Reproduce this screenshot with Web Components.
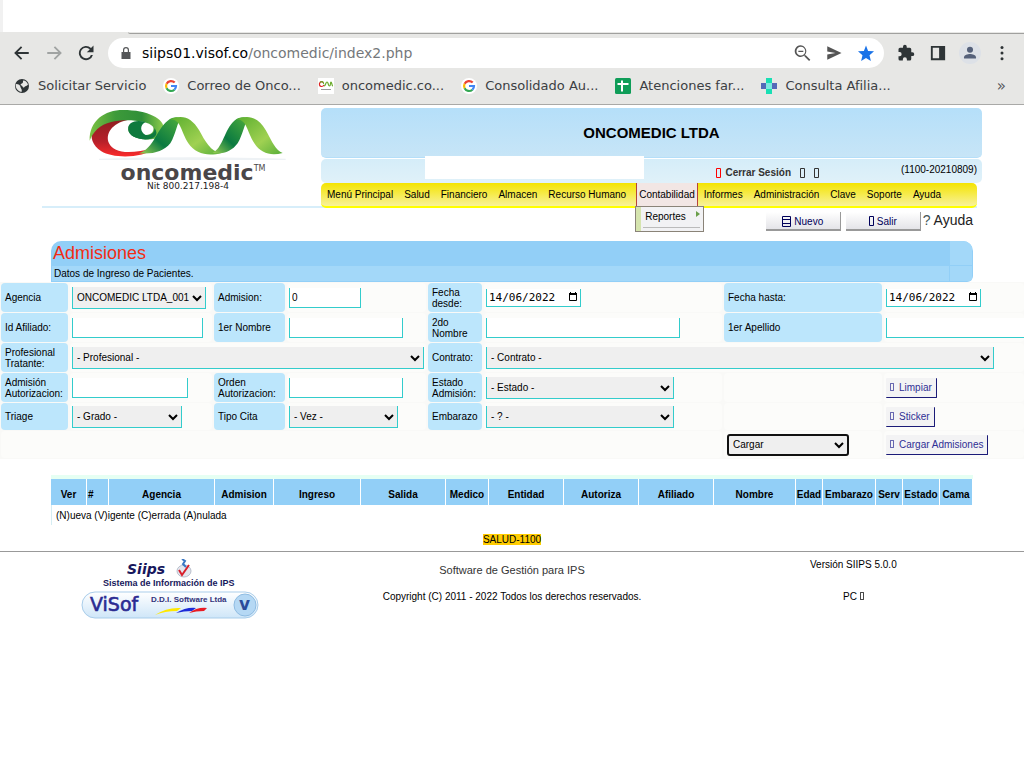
<!DOCTYPE html>
<html lang="es">
<head>
<meta charset="utf-8">
<title>SIIPS - Admisiones</title>
<style>
  body {
    margin: 0;
    background: #fff;
    color: #000;
    font-family: "Liberation Sans", Arial, sans-serif;
    font-size: 10px;
    line-height: 11px;
    overflow-x: hidden;
  }
</style>
</head>
<body>

<browser-bar host="siips01.visof.co" path="/oncomedic/index2.php">
  <bookmark-link icon="globe">Solicitar Servicio</bookmark-link>
  <bookmark-link icon="google">Correo de Onco...</bookmark-link>
  <bookmark-link icon="onco">oncomedic.co...</bookmark-link>
  <bookmark-link icon="google">Consolidado Au...</bookmark-link>
  <bookmark-link icon="sheet">Atenciones far...</bookmark-link>
  <bookmark-link icon="cross">Consulta Afilia...</bookmark-link>
</browser-bar>

<clinic-header company="ONCOMEDIC LTDA" session="(1100-20210809)">
  <onco-logo slot="logo"></onco-logo>
  <main-menu slot="menu"></main-menu>
</clinic-header>

<page-actions></page-actions>
<page-title heading="Admisiones">Datos de Ingreso de Pacientes.</page-title>
<admission-form></admission-form>
<admission-table></admission-table>
<page-footer></page-footer>

<script>
/**
 * Base class: renders the template() string in an open shadow root
 */
class BaseElement extends HTMLElement {
  connectedCallback() {
    if (this.shadowRoot) return;
    this.attachShadow({ mode: 'open' });
    this.shadowRoot.innerHTML = this.template();
  }
}

const icons = {
  globe: `<svg viewBox="0 0 16 16"><circle cx="8" cy="8" r="7" fill="#2e3436"/><path d="M2 6c3 0 4 1 4.500 3s2 2 1 5C3 13 1 9 2 6z M9 2.500c3 0 4 2 5 4-1 2-3 1-4 3-2 0-1-2-3-2-1-1 0-2 1-2 1-1 1-1 1-3z" fill="#e7e7e5"/></svg>`,
  google: `<svg viewBox="0 0 16 16"><circle cx="8" cy="8" r="8" fill="#fff"/><g fill="none" stroke-width="2.2"><path d="M11.700 4.600A5 5 0 0 0 3.600 5.800" stroke="#ea4335"/><path d="M3.600 5.800a5 5 0 0 0 0 4.400" stroke="#fbbc05"/><path d="M3.600 10.200a5 5 0 0 0 7.800 1.500" stroke="#34a853"/><path d="M11.400 11.700A5 5 0 0 0 13 8H8" stroke="#4285f4"/></g></svg>`,
  onco: `<svg viewBox="0 0 16 16"><path d="M0 0h16v16H0z" fill="#fff"/><g fill="none" stroke-width="1.200"><path d="M5 4.500C3 2.500 1 5 1.500 7S5 9 6 7" stroke="#d22"/><path d="M2 4.500C4 2.500 6 4 5.500 6M6 8c2 0 1.500-4 3-4s1 4 2.500 4S12 4 13 4s.5 4 2 4" stroke="#6aab2b"/></g><path d="M3 11.500h10" stroke="#999"/></svg>`,
  sheet: `<svg viewBox="0 0 16 16"><rect width="16" height="16" rx="1.500" fill="#0f9d58"/><path d="M7 2.500v11M2.500 6h11" stroke="#fff" stroke-width="2"/></svg>`,
  cross: `<svg viewBox="0 0 16 16"><path d="M0 5h16v6H0z" fill="#5468b8"/><path d="M5 0h6v16H5z" fill="#19dfb4"/><path d="M5 5h6v6H5z" fill="#7ce8e0"/></svg>`,
  // empty glyph box
  box: `<svg viewBox="0 0 5 10" width="5" height="10" fill="none" stroke="currentColor"><path d="M.5.500h4v9h-4z"/></svg>`
};

class BookmarkLink extends BaseElement {
  template() {
    return `
      <style>
        :host { display: block; }
        a { display: flex; align-items: center; gap: 8px; color: #3c4043; text-decoration: none; }
        svg { width: 16px; height: 16px; flex: none; }
      </style>
      <a href="#">${icons[this.getAttribute('icon')]}<span><slot></slot></span></a>
    `;
  }
}

class BrowserBar extends BaseElement {
  template() {
    return `
      <style>
        :host {
          display: block;
          font-family: "DejaVu Sans", sans-serif;
          color: #2e3436;
        }
        .tabs { height: 32px; border-left: 3px solid #f1f1f1; box-sizing: border-box; }
        .chrome { background: #e7e7e5; border-bottom: 1px solid #a9a9a7; }
        .edge { display: flex; height: 6px; }
        .edge i { width: 128px; }
        .edge b { flex: 1; height: 1px; border-bottom: 1px solid #a0a09e; border-radius: 0 0 0 4px; }
        .row { display: flex; align-items: center; height: 30px; }
        button {
          border: 0; background: none; padding: 0; margin: 0;
          width: 32px; height: 30px;
          display: flex; align-items: center; justify-content: center;
          color: inherit;
        }
        button svg { width: 18px; height: 18px; fill: currentColor; }
        button.off { color: #a0a3a2; }
        .nav { display: flex; padding: 0 6px; }
        .omnibox {
          flex: 1; display: flex; align-items: center;
          height: 30px; border-radius: 15px; background: #fff; color: #555;
          padding-right: 2px;
        }
        .lock { width: 14px; height: 14px; margin: 0 9px 0 11px; fill: #555759; }
        .url { flex: 1; font-size: 14px; line-height: 18px; color: #75787b; }
        .url b { font-weight: normal; color: #000; }
        .star { color: #1a73e8; }
        .tools { display: flex; padding: 0 6px; }
        .avatar svg { background: #dde1e7; border-radius: 50%; width: 22px; height: 22px; fill: #55617a; }
        .marks {
          display: flex; align-items: center; gap: 17px;
          height: 36px; padding: 0 18px 0 14px;
          font-size: 13px; line-height: 16px;
        }
        .more { margin-left: auto; color: #55585b; font-size: 15px; }
      </style>
      <div class="tabs"></div>
      <div class="chrome">
        <div class="edge"><i></i><b></b></div>
        <div class="row">
          <div class="nav">
            <button aria-label="Atrás"><svg viewBox="0 0 24 24"><path d="M21 10.800H6.300l6-6L10.600 3 1.500 12l9.100 9 1.700-1.800-6-6H21z"/></svg></button>
            <button class="off" aria-label="Adelante"><svg viewBox="0 0 24 24"><path d="M3 10.800h14.700l-6-6L13.400 3l9.100 9-9.100 9-1.700-1.800 6-6H3z"/></svg></button>
            <button aria-label="Recargar"><svg viewBox="0 0 24 24"><path d="M18.700 5.300A9.500 9.500 0 1 0 21.200 14.500h-2.700A7 7 0 1 1 17 7.200L13 11h9V2z"/></svg></button>
          </div>
          <div class="omnibox">
            <svg class="lock" viewBox="0 0 14 14"><path d="M4 6V4a3 3 0 0 1 6 0v2h1.500v7h-9V6zm1.200 0h3.600V4a1.800 1.800 0 0 0-3.600 0z"/></svg>
            <span class="url"><b>${this.getAttribute('host')}</b>${this.getAttribute('path')}</span>
            <button aria-label="Zoom"><svg viewBox="0 0 24 24"><path d="M15.500 14h-.8l-.3-.3a7 7 0 1 0-.7.700l.3.300v.800l5.500 5.500 1.500-1.500zm-6 .5a5.300 5.300 0 1 1 0-10.600 5.300 5.300 0 0 1 0 10.600zM6.500 8.600h6v1.400h-6z" transform="translate(0 -.5) scale(1.100)"/></svg></button>
            <button aria-label="Enviar"><svg viewBox="0 0 24 24"><path d="M3 21l19-9L3 3v7l11 2-11 2z"/></svg></button>
            <button class="star" aria-label="Marcador"><svg viewBox="0 0 24 24"><path d="M12 18.500l6.500 4.200-1.800-7.700 6-5.200-7.900-.6L12 2 9.200 9.200l-7.900.6 6 5.200-1.800 7.700z"/></svg></button>
          </div>
          <div class="tools">
            <button aria-label="Extensiones"><svg viewBox="0 0 24 24"><path d="M20.500 11H19V7a2 2 0 0 0-2-2h-4V3.500a2.500 2.500 0 0 0-5 0V5H4a2 2 0 0 0-2 2v3.800h1.500a2.700 2.700 0 0 1 0 5.400H2V20a2 2 0 0 0 2 2h3.800v-1.500a2.700 2.700 0 0 1 5.400 0V22H17a2 2 0 0 0 2-2v-4h1.500a2.500 2.500 0 0 0 0-5z"/></svg></button>
            <button aria-label="Panel lateral"><svg viewBox="0 0 24 24"><path d="M2.500 2.500h19v19h-19zM5 5v14h8.500V5z" fill-rule="evenodd"/></svg></button>
            <button class="avatar" aria-label="Perfil"><svg viewBox="0 0 24 24"><circle cx="12" cy="8.500" r="3.300"/><path d="M5.500 18v-1.500c0-2.500 4-3.500 6.500-3.500s6.500 1 6.500 3.500V18z"/></svg></button>
            <button aria-label="Menú"><svg viewBox="0 0 24 24"><circle cx="12" cy="4.500" r="2"/><circle cx="12" cy="12" r="2"/><circle cx="12" cy="19.500" r="2"/></svg></button>
          </div>
        </div>
        <div class="marks"><slot></slot><span class="more">»</span></div>
      </div>
    `;
  }
}

class OncoLogo extends BaseElement {
  template() {
    return `
      <style>
        :host { display: flex; flex-direction: column; align-items: center; font-family: "DejaVu Sans", sans-serif; color: #4a4648; }
        svg { width: 200px; height: 55px; }
        .name { font-size: 22px; font-weight: bold; line-height: 19px; padding-left: 10px; }
        sup { font-size: 8px; line-height: 8px; font-weight: normal; vertical-align: 9px; }
        .nit { font-size: 9px; line-height: 9px; color: #222; }
      </style>
      <svg viewBox="145 12 600 165">
        <defs>
          <linearGradient id="top"><stop offset="0" stop-color="#7cc242"/><stop offset=".35" stop-color="#3d9a3a"/><stop offset=".7" stop-color="#2f8f38"/><stop offset="1" stop-color="#8fce4c"/></linearGradient>
          <linearGradient id="red" x2="0" y2="1"><stop offset="0" stop-color="#8e1f22"/><stop offset=".6" stop-color="#b8202a"/><stop offset="1" stop-color="#fb2b2b"/></linearGradient>
          <linearGradient id="rise" x1="0" y1="1" x2="1" y2="0"><stop offset="0" stop-color="#9ed153"/><stop offset=".4" stop-color="#0b7a41"/><stop offset="1" stop-color="#4fae3c"/></linearGradient>
          <linearGradient id="fall" x2="1" y2="1"><stop offset="0" stop-color="#5aae2e"/><stop offset=".6" stop-color="#a0d152"/><stop offset="1" stop-color="#57ae3a"/></linearGradient>
        </defs>
        <path d="M178 166q280-8 560 0z" fill="#eaf1f5" stroke="#eef2f5" stroke-width="4"/>
        <path d="M160 80C180 50 220 44 264 48C216 58 196 90 208 118C222 148 270 152 345 132C310 164 220 164 185 142C158 124 150 98 160 80z" fill="url(#red)"/>
        <path d="M150 110C148 50 195 18 250 18C325 18 374 44 373 76C372 98 350 110 310 106C280 102 262 88 266 70C270 58 285 50 305 54C292 66 296 84 312 92C332 96 346 82 340 68C325 48 250 44 215 54C180 62 160 84 150 110z" fill="url(#top)"/>
        <path d="M266 72C266 56 286 46 318 54C300 62 300 84 318 93C335 96 346 84 344 72C360 92 345 108 310 106C280 102 264 90 266 72z" fill="#0f7a3e"/>
        <path d="M298 148C345 130 350 76 384 50C398 38 412 38 424 42C412 56 408 92 392 118C372 142 340 152 298 148z" fill="url(#rise)"/>
        <path d="M392 46C430 30 456 42 478 78C498 114 512 142 545 147C505 158 468 150 446 118C424 84 424 46 392 46z" fill="url(#fall)"/>
        <path d="M518 147C550 132 554 76 584 50C598 38 612 38 628 42C614 56 610 92 594 118C576 142 552 152 518 147z" fill="url(#rise)"/>
        <path d="M590 46C630 30 656 42 678 78C698 114 708 140 729 147C696 156 664 150 644 118C622 84 622 46 590 46z" fill="url(#fall)"/>
      </svg>
      <div class="name">oncomedic<sup>TM</sup></div>
      <div class="nit">Nit 800.217.198-4</div>
    `;
  }
}

class ClinicHeader extends BaseElement {
  template() {
    return `
      <style>
        :host { display: block; margin: 3px 42px 0; }
        .bar { display: grid; grid-template-columns: minmax(0, 279fr) minmax(0, 661fr); }
        .logo { padding-left: 13px; height: 83px; }
        .company {
          display: flex; align-items: center; justify-content: center;
          height: 50px; border-radius: 5px; border-bottom: 1px solid #b5dff9; box-sizing: border-box;
          background: linear-gradient(#b5dff9, #c7e5f7);
          font-size: 15px; font-weight: bold; line-height: 18px;
          margin-bottom: 1px;
        }
        .session {
          position: relative;
          display: flex; align-items: center;
          height: 24px; border-radius: 5px;
          background: linear-gradient(#d5edf9, #e0f1f9);
          padding-right: 5px;
        }
        .user { position: absolute; left: 104px; top: -3px; width: 219px; height: 23px; background: #fff; }
        .close { margin-left: auto; padding-top: 3px; display: flex; align-items: center; gap: 9px; font-weight: bold; }
        .close a { display: flex; align-items: center; gap: 4px; color: #333; text-decoration: none; }
        .close i { display: flex; color: #f00; }
        .code { margin-left: 82px; padding-bottom: 3px; }
        .menu { margin-right: 5px; }
        .line { height: 2px; background: #d7eefa; margin: -2px 5px 0 0; }
      </style>
      <div class="bar">
        <div class="logo"><slot name="logo"></slot></div>
        <div class="info">
          <div class="company">${this.getAttribute('company')}</div>
          <div class="session">
            <div class="user"></div>
            <div class="close">
              <a href="#"><i>${icons.box}</i>Cerrar Sesión</a>
              <a href="#" aria-label="Usuario">${icons.box}</a>
              <a href="#" aria-label="Inicio">${icons.box}</a>
            </div>
            <div class="code">${this.getAttribute('session')}</div>
          </div>
          <div class="menu"><slot name="menu"></slot></div>
        </div>
      </div>
      <div class="line"></div>
    `;
  }
}

class MainMenu extends BaseElement {
  template() {
    const before = ['Menú Principal', 'Salud', 'Financiero', 'Almacen', 'Recurso Humano'];
    const after = ['Informes', 'Administración', 'Clave', 'Soporte', 'Ayuda'];
    const link = text => `<a href="#">${text}</a>`;
    return `
      <style>
        :host { display: block; }
        nav {
          display: flex; height: 25px; box-sizing: border-box;
          border-bottom: 2px solid #ff0; border-radius: 5px;
          background: linear-gradient(#f4e400, #f8f29c);
          padding-left: 1px;
        }
        a { color: #000; text-decoration: none; line-height: 23px; padding: 0 6px 0 5px; white-space: nowrap; }
        .open { position: relative; margin: 0 1px 0 4px; border: 1px solid #b5443a; border-width: 0 1px; background: #f2e6e4; }
        .open > a { padding: 0 2px; }
        .sub {
          position: absolute; left: -2px; top: 23px; z-index: 2;
          border: 1px solid #8a8378; background: #f2f2f4;
          width: 67px; height: 24px;
          display: flex;
        }
        .sub::before { content: ""; width: 5px; background: #d5e4ae; }
        .sub a { flex: 1; display: flex; justify-content: space-between; margin: 0 3px 3px 2px; border-bottom: 1px solid #bbb; padding: 0 0 0 2px; line-height: 19px; }
        .sub svg { width: 4px; height: 6px; margin-top: 4px; fill: #6a9f4a; }
      </style>
      <nav>
        ${before.map(link).join('')}
        <div class="open">
          <a href="#">Contabilidad</a>
          <div class="sub"><a href="#">Reportes <svg viewBox="0 0 4 6"><path d="M0 0l4 3-4 3z"/></svg></a></div>
        </div>
        ${after.map(link).join('')}
      </nav>
    `;
  }
}

class PageActions extends BaseElement {
  template() {
    return `
      <style>
        :host { display: flex; justify-content: flex-end; gap: 5px; margin: 4px 51px 10px; height: 19px; }
        button {
          font: inherit; color: #00005a; width: 75px; height: 19px; padding: 1px 0 0;
          display: flex; align-items: center; justify-content: center; gap: 3px;
          border: 0 solid #999; border-width: 0 1px 2px 0;
          background: linear-gradient(#fff, #e4e4e8);
        }
        .doc { width: 9px; height: 11px; }
        a { font-size: 14px; line-height: 17px; color: #222; text-decoration: none; margin-left: -3px; display: flex; gap: 3px; }
        a span { color: #455; }
      </style>
      <button><svg class="doc" viewBox="0 0 9 11" fill="none" stroke="#00005a"><path d="M.5.500h8v10h-8zM1 3.500h7M1 7.500h7"/></svg>Nuevo</button>
      <button>${icons.box}Salir</button>
      <a href="#"><span>?</span>Ayuda</a>
    `;
  }
}

class PageTitle extends BaseElement {
  template() {
    return `
      <style>
        :host { display: block; margin: 0 51px; background: #92cff7; border-radius: 10px 10px 6px 0; overflow: hidden; }
        .grid { display: grid; grid-template-columns: 1fr 22px; column-gap: 1px; padding: 0 1px 1px; }
        h1 { margin: 0; padding-left: 1px; font-size: 18px; font-weight: normal; line-height: 25px; color: #f32c13; }
        p { margin: 0; padding-left: 2px; line-height: 15px; background: #a3d8f9; }
        .side { background: #a3d8f9; }
        .side:first-of-type { margin-bottom: 1px; }
      </style>
      <div class="grid">
        <h1>${this.getAttribute('heading')}</h1><div class="side"></div>
        <p><slot></slot></p><div class="side"></div>
      </div>
    `;
  }
}

/**
 * Label and control pair, both are items of the surrounding grid
 * Attributes: label, kind (text | date | select), value, width, span
 */
class FormField extends BaseElement {
  control() {
    const value = this.getAttribute('value') || '';
    switch (this.getAttribute('kind')) {
      case 'select':
        return `<select id="c"><option>${value}</option></select>`;
      case 'date':
        return `<span class="date"><input id="c" type="text" inputmode="numeric" value="${value}">
          <svg viewBox="0 0 10 10"><path d="M1.500 1.500h7v7h-7z" fill="none" stroke="#000"/><path d="M1 1h8v2H1zM2 0h1v2H2zM7 0h1v2H7z"/></svg></span>`;
      default:
        return `<input id="c" type="text" value="${value}">`;
    }
  }

  template() {
    const span = this.getAttribute('span') || 1;
    const width = this.getAttribute('width');
    return `
      <style>
        :host { display: contents; }
        label { display: flex; align-items: center; background: #bce6fc; border-radius: 4px; padding: 0 2px 0 4px; }
        .cell { display: flex; align-items: center; background: #fcfcfa; border-radius: 4px; padding-left: 2px; grid-column: span ${span}; min-width: 0; }
        input, select, .date {
          font: inherit; color: #000; box-sizing: border-box; margin: 0;
          border: 1px solid #3cc; border-top: 0; border-radius: 0; background: #fff;
          width: ${width}px; height: 20px; padding: 0 2px; flex: none;
        }
        select { height: 22px; background: #efefef; padding: 0; }
        .date { display: flex; align-items: center; height: 18px; padding-right: 2px; }
        .date input { border: 0; padding: 0; width: auto; flex: 1; min-width: 0; height: 16px; font-family: "DejaVu Sans Mono", monospace; font-size: 11px; }
        .date svg { width: 10px; height: 10px; flex: none; }
      </style>
      <label for="c">${this.getAttribute('label')}</label>
      <div class="cell">${this.control()}</div>
    `;
  }
}

class LinkButton extends BaseElement {
  template() {
    return `
      <style>
        :host { display: block; }
        button {
          font: inherit; color: #2f2f95; background: #f3f3f4; height: 20px; padding: 0 4px;
          border: 0 solid #1b1b78; border-width: 0 1px 1px 0; border-radius: 1px;
          display: flex; align-items: center; gap: 5px; white-space: nowrap;
        }
        svg { width: 4px; height: 8px; }
      </style>
      <button type="button">${icons.box}<span><slot></slot></span></button>
    `;
  }
}

class AdmissionForm extends BaseElement {
  template() {
    return `
      <style>
        :host { display: block; overflow: hidden; }
        form {
          display: grid;
          grid-template-columns: 67px minmax(0, 142fr) 71px minmax(0, 139fr) 54px minmax(0, 238fr) 158px minmax(0, 140fr);
          grid-template-rows: repeat(4, 29px) repeat(2, 27px);
          gap: 1px 2px; padding: 1px 0 1px 1px;
          background: #f9f9f7;
        }
        .empty, .cell { background: #fcfcfa; border-radius: 4px; }
        .cell { display: flex; align-items: center; padding-left: 2px; }
        .wide { grid-column: span 6; }
        .load { font: inherit; margin-left: 1px; width: 122px; height: 22px; padding: 0; color: #000; background: #efefef; border: 2px solid #111; border-radius: 3px; }
      </style>
      <form>
        <form-field label="Agencia" kind="select" value="ONCOMEDIC LTDA_001" width="134"></form-field>
        <form-field label="Admision:" value="0" width="72"></form-field>
        <form-field label="Fecha desde:" kind="date" value="14/06/2022" width="95"></form-field>
        <form-field label="Fecha hasta:" kind="date" value="14/06/2022" width="95"></form-field>

        <form-field label="Id Afiliado:" width="131"></form-field>
        <form-field label="1er Nombre" width="114"></form-field>
        <form-field label="2do Nombre" width="194"></form-field>
        <form-field label="1er Apellido" width="194"></form-field>

        <form-field label="Profesional Tratante:" kind="select" value="- Profesional -" width="352" span="3"></form-field>
        <form-field label="Contrato:" kind="select" value="- Contrato -" width="508" span="3"></form-field>

        <form-field label="Admisión Autorizacion:" width="116"></form-field>
        <form-field label="Orden Autorizacion:" width="114"></form-field>
        <form-field label="Estado Admisión:" kind="select" value="- Estado -" width="188"></form-field>
        <div class="empty"></div>
        <div class="cell"><link-button>Limpiar</link-button></div>

        <form-field label="Triage" kind="select" value="- Grado -" width="110"></form-field>
        <form-field label="Tipo Cita" kind="select" value="- Vez -" width="109"></form-field>
        <form-field label="Embarazo" kind="select" value="- ? -" width="188"></form-field>
        <div class="empty"></div>
        <div class="cell"><link-button>Sticker</link-button></div>

        <div class="empty wide"></div>
        <div class="cell"><select class="load" aria-label="Acción"><option>Cargar</option></select></div>
        <div class="cell"><link-button>Cargar Admisiones</link-button></div>
      </form>
    `;
  }
}

class AdmissionTable extends BaseElement {
  template() {
    const columns = [
      ['Ver', 36], ['#', 22], ['Agencia', 106], ['Admision', 59], ['Ingreso', 87], ['Salida', 85],
      ['Medico', 43], ['Entidad', 75], ['Autoriza', 75], ['Afiliado', 75], ['Nombre', 82], ['Edad', 27],
      ['Embarazo', 53], ['Serv', 27], ['Estado', 37], ['Cama', 33]
    ];
    return `
      <style>
        :host { display: block; margin: 16px 51px 0; border-top: 4px solid #e6fff3; }
        table { width: 100%; table-layout: fixed; border-spacing: 0; }
        th { background: #92cff7; height: 22px; padding: 4px 0 0; border-right: 1px solid #fff; white-space: nowrap; }
        th:nth-child(2) { text-align: left; padding-left: 1px; }
        td { height: 20px; padding: 0 4px; border-left: 1px solid #d5edf3; }
      </style>
      <table>
        <colgroup>${columns.map(c => `<col style="width:${c[1]}px">`).join('')}</colgroup>
        <thead><tr>${columns.map(c => `<th>${c[0]}</th>`).join('')}</tr></thead>
        <tbody><tr><td colspan="${columns.length}">(N)ueva (V)igente (C)errada (A)nulada</td></tr></tbody>
      </table>
    `;
  }
}

class VisofLogo extends BaseElement {
  template() {
    return `
      <style>
        :host { display: block; }
        svg { display: block; width: 180px; height: 62px; margin: 0 auto; font-family: "Liberation Sans", sans-serif; font-weight: bold; fill: #17175c; }
      </style>
      <svg viewBox="0 0 180 62">
        <defs>
          <linearGradient id="pill" x2="0" y2="1"><stop offset="0" stop-color="#fff"/><stop offset="1" stop-color="#cfe6f8"/></linearGradient>
        </defs>
        <text x="46" y="15" font-family="DejaVu Sans" font-style="italic" font-size="14">Siips</text>
        <ellipse cx="103" cy="12" rx="7" ry="6" fill="#e3e6ee" stroke="#b9bfcc"/>
        <path d="M98 11l3 5 7-10" fill="none" stroke="#d8202c" stroke-width="2"/>
        <path d="M101 0l3 2-2 3 3 3" fill="none" stroke="#3b78c4" stroke-width="2"/>
        <text x="22" y="27" font-size="9">Sistema de Información de IPS</text>
        <rect x="1" y="33" width="176" height="26" rx="13" fill="url(#pill)" stroke="#a9cdea" stroke-width="1"/>
        <text x="9" y="52" font-family="DejaVu Sans" font-size="19" font-weight="normal" fill="#2b2b92" stroke="#2b2b92" stroke-width=".6">ViSof</text>
        <text x="70" y="43" font-size="8" fill="#33337a">D.D.I. Software Ltda</text>
        <path d="M74 56q12-8 26-7l-4 3q-12 0-22 4z" fill="#ffe800"/>
        <path d="M95 54q10-6 20-5l-4 3q-8 0-16 2z" fill="#1c2bd8"/>
        <path d="M108 54q8-6 18-5l-3 3q-8 0-15 2z" fill="#e81c24"/>
        <circle cx="164" cy="46" r="11" fill="#b5d8f4" stroke="#8fbce2"/>
        <text x="158" y="51" font-size="17" font-family="DejaVu Sans" fill="#2b4a9a">v</text>
      </svg>
    `;
  }
}

class PageFooter extends BaseElement {
  template() {
    return `
      <style>
        :host { display: block; text-align: center; }
        .unit { margin: 9px 0 6px; }
        mark { background: #fc0; color: #000; }
        footer { display: grid; grid-template-columns: repeat(3, 1fr); border-top: 1px solid #999; padding-top: 7px; }
        p { margin: 0; }
        .soft { font-size: 11px; line-height: 13px; color: #333; margin: 5px 0 14px; }
        .version { margin-bottom: 21px; }
        .pc svg { width: 4px; height: 8px; }
      </style>
      <p class="unit"><mark>SALUD-1100</mark></p>
      <footer>
        <visof-logo></visof-logo>
        <div><p class="soft">Software de Gestión para IPS</p><p>Copyright (C) 2011 - 2022 Todos los derechos reservados.</p></div>
        <div><p class="version">Versión SIIPS 5.0.0</p><p class="pc">PC ${icons.box}</p></div>
      </footer>
    `;
  }
}

customElements.define('bookmark-link', BookmarkLink);
customElements.define('browser-bar', BrowserBar);
customElements.define('onco-logo', OncoLogo);
customElements.define('clinic-header', ClinicHeader);
customElements.define('main-menu', MainMenu);
customElements.define('page-actions', PageActions);
customElements.define('page-title', PageTitle);
customElements.define('form-field', FormField);
customElements.define('link-button', LinkButton);
customElements.define('admission-form', AdmissionForm);
customElements.define('admission-table', AdmissionTable);
customElements.define('visof-logo', VisofLogo);
customElements.define('page-footer', PageFooter);
</script>
</body>
</html>
